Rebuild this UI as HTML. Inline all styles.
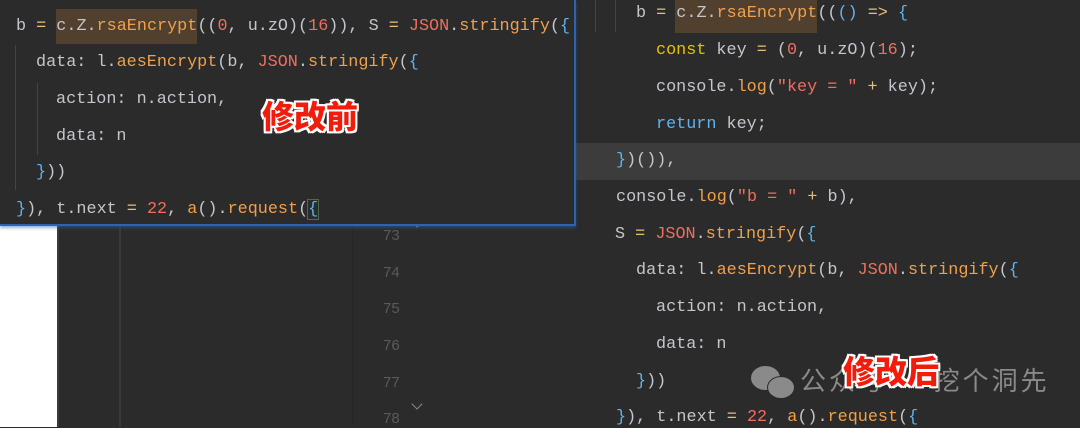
<!DOCTYPE html>
<html><head><meta charset="utf-8"><style>
body{margin:0;width:1080px;height:427px;background:#2b2b2b;position:relative;overflow:hidden;font-family:"Liberation Mono",monospace;}
.c{position:absolute;font-size:16.8px;color:#c4c6cc;white-space:pre;line-height:20px;}
.o{color:#f0a04b}.r{color:#ef6f5e}.b{color:#5fb3ef}.y{color:#e5c07b}.k{color:#e5c300}.n{color:#ef6f5e}
.ln{position:absolute;left:383px;font-size:15px;color:#5a5a5a;font-family:"Liberation Sans",sans-serif}
.ar{position:absolute;left:413px;width:7px;height:7px;border-right:1.5px solid #8a8a8a;border-bottom:1.5px solid #8a8a8a;transform:rotate(45deg)}
.lab{position:absolute;font-family:"Noto Sans CJK SC",sans-serif;font-weight:900;font-size:32px;color:#f21c0c;text-shadow:2px 0 #fff,-2px 0 #fff,0 2px #fff,0 -2px #fff,2px 2px #fff,-2px -2px #fff,2px -2px #fff,-2px 2px #fff;line-height:40px}
</style></head><body>
<div style="position:absolute;left:0;top:226px;width:57px;height:201px;background:#fff"></div>
<div style="position:absolute;left:57px;top:226px;width:2px;height:201px;background:#3a3a3a"></div>
<div style="position:absolute;left:119px;top:226px;width:2px;height:201px;background:#3a3a3a"></div>
<div style="position:absolute;left:352px;top:226px;width:1px;height:201px;background:#262626"></div>
<div style="position:absolute;left:576px;top:143px;width:504px;height:37px;background:#3c3c3c"></div>
<div style="position:absolute;left:595px;top:0;width:1px;height:32px;background:#444"></div>
<div style="position:absolute;left:615px;top:0;width:1px;height:32px;background:#444"></div>

<div class="ln" style="top:227px">73</div><div class="ln" style="top:264px">74</div><div class="ln" style="top:300px">75</div><div class="ln" style="top:337px">76</div><div class="ln" style="top:374px">77</div><div class="ln" style="top:410px">78</div>
<div class="ar" style="top:218px"></div><div class="ar" style="top:400px"></div>

<div style="position:absolute;left:675px;top:0;width:142px;height:33px;background:#52402f"></div>
<div class="c" style="left:636px;top:4px">b <span class="y">=</span> c.Z.<span class="o">rsaEncrypt</span>((<span class="b">()</span> <span class="y">=&gt;</span> <span class="b">{</span></div>
<div class="c" style="left:656px;top:41px"><span class="k">const</span> key <span class="y">=</span> (<span class="n">0</span>, u.zO)(<span class="n">16</span>);</div>
<div class="c" style="left:656px;top:78px">console.<span class="o">log</span>(<span class="r">"key = "</span> <span class="y">+</span> key);</div>
<div class="c" style="left:656px;top:115px"><span class="b">return</span> key;</div>
<div class="c" style="left:616px;top:151px"><span class="b">}</span>)()),</div>
<div class="c" style="left:616px;top:188px">console.<span class="o">log</span>(<span class="r">"b = "</span> <span class="y">+</span> b),</div>
<div class="c" style="left:615px;top:225px">S <span class="y">=</span> <span class="r">JSON</span>.<span class="o">stringify</span>(<span class="b">{</span></div>
<div class="c" style="left:636px;top:261px">data: l.<span class="o">aesEncrypt</span>(b, <span class="r">JSON</span>.<span class="o">stringify</span>(<span class="b">{</span></div>
<div class="c" style="left:656px;top:298px">action: n.action,</div>
<div class="c" style="left:656px;top:335px">data: n</div>
<div class="c" style="left:636px;top:372px"><span class="b">}</span>))</div>
<div class="c" style="left:616px;top:408px"><span class="b">}</span>), t.next <span class="y">=</span> <span class="n">22</span>, <span class="o">a</span>().<span class="o">request</span>(<span class="b">{</span></div>

<div style="position:absolute;left:751px;top:366px;width:29px;height:24px;border-radius:50%;background:#8a8a8a"></div>
<div style="position:absolute;left:767px;top:376px;width:26px;height:21px;border-radius:50%;background:#8a8a8a;border:1.5px solid #2b2b2b"></div>
<div style="position:absolute;left:800px;top:362px;font-family:'Noto Sans CJK SC',sans-serif;font-size:26px;color:#8a8a8a;letter-spacing:3px;line-height:36px">公众号 · 挖个洞先</div>
<div class="lab" style="left:843px;top:350px">修改后</div>

<div style="position:absolute;left:0;top:0;width:574px;height:224px;background:#2b2b2b;border:1px solid #2d63b0;border-width:0 2px 2px 0;box-shadow:0 2px 3px rgba(40,100,180,.5)"></div>
<div style="position:absolute;left:15px;top:45px;width:1px;height:145px;background:#444"></div>
<div style="position:absolute;left:37px;top:83px;width:1px;height:72px;background:#444"></div>
<div style="position:absolute;left:56px;top:9px;width:141px;height:35px;background:#52402f"></div>
<div class="c" style="left:16px;top:17px">b <span class="y">=</span> c.Z.<span class="o">rsaEncrypt</span>((<span class="n">0</span>, u.zO)(<span class="n">16</span>)), S <span class="y">=</span> <span class="r">JSON</span>.<span class="o">stringify</span>(<span class="b">{</span></div>
<div class="c" style="left:36px;top:53px">data: l.<span class="o">aesEncrypt</span>(b, <span class="r">JSON</span>.<span class="o">stringify</span>(<span class="b">{</span></div>
<div class="c" style="left:56px;top:90px">action: n.action,</div>
<div class="c" style="left:56px;top:127px">data: n</div>
<div class="c" style="left:36px;top:163px"><span class="b">}</span>))</div>
<div class="c" style="left:16px;top:200px"><span class="b">}</span>), t.next <span class="y">=</span> <span class="n">22</span>, <span class="o">a</span>().<span class="o">request</span>(<span class="b" style="outline:1px solid #4a6a4a">{</span></div>
<div class="lab" style="left:262px;top:95px">修改前</div>
</body></html>
